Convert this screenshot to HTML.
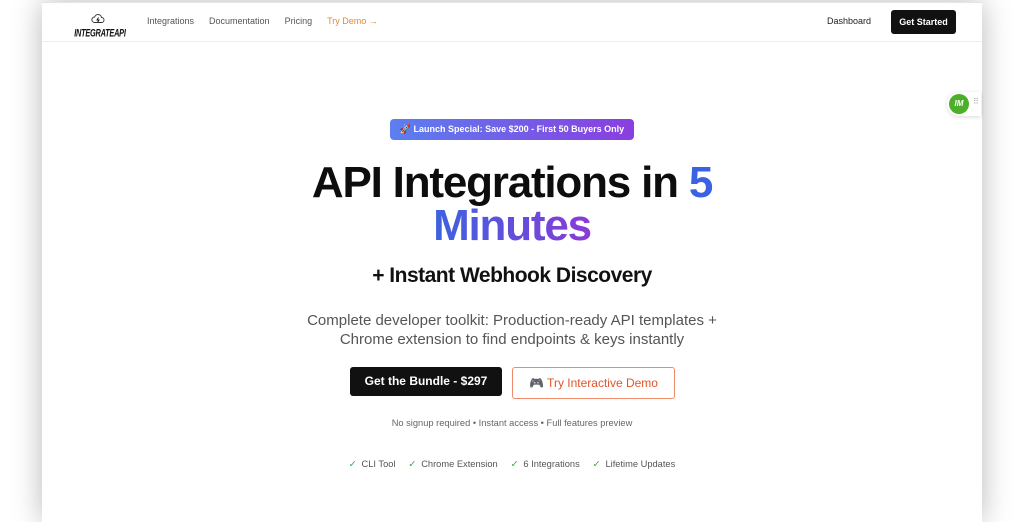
<!DOCTYPE html>
<html><head><meta charset="utf-8"><style>
*{margin:0;padding:0;box-sizing:border-box}
html,body{width:1024px;height:512px;overflow:hidden;background:#fff;font-family:"Liberation Sans",Arial,sans-serif}
.page{position:absolute;left:42px;top:2px;width:940px;height:520px;background:#fff;box-shadow:0 0 28px rgba(0,0,0,.28);border-top:1px solid #e5e5e5}
.nav{position:absolute;left:0;top:0;width:940px;height:39px;border-bottom:1px solid #eee}
.logo{position:absolute;left:27px;top:8px;width:58px;text-align:center}
.logo b{display:block;font-style:italic;font-weight:900;font-size:9px;letter-spacing:-.3px;color:#111;margin-top:-1px;transform:scale(.82,1.2);white-space:nowrap}
.links{position:absolute;left:105px;top:13px;font-size:9px;color:#555;white-space:nowrap}
.links span{margin-right:15px}
.dash{position:absolute;left:785px;top:13px;font-size:9px;color:#222}
.gs{position:absolute;left:849px;top:7px;width:65px;height:24px;background:#111;border-radius:3px;color:#fff;font-size:9px;font-weight:bold;text-align:center;line-height:24px}
.c{position:absolute;left:0;width:940px;text-align:center}
.badge{display:inline-block;height:21px;line-height:21px;padding:0 10px;border-radius:4px;background:linear-gradient(90deg,#5b7ff0,#8a3ee0);color:#fff;font-size:9px;font-weight:bold}
h1{font-size:44px;font-weight:bold;letter-spacing:-1.2px;line-height:43px;color:#0d0d0d}
.g{display:inline-block;background:linear-gradient(90deg,#3b63e0,#8a3ad8);-webkit-background-clip:text;background-clip:text;color:transparent}
.btn1{position:absolute;left:308px;top:364px;width:152px;height:29px;background:#111;border-radius:3px;color:#fff;font-size:12px;font-weight:bold;text-align:center;line-height:29px}
.btn2{position:absolute;left:470px;top:364px;width:163px;height:32px;border:1px solid #ee8a6a;border-radius:3px;color:#e2552a;font-size:12px;text-align:center;line-height:30px}
.ck{color:#3aa64a;margin-right:5px}
.fw{position:absolute;left:905px;top:89px;width:34px;height:24px;background:#fff;border-radius:12px 0 0 12px;box-shadow:0 1px 4px rgba(0,0,0,.15)}
.fw i{position:absolute;left:2px;top:2px;width:20px;height:20px;border-radius:50%;background:#4caf2a;color:#fff;font-size:8px;font-weight:900;font-style:italic;text-align:center;line-height:20px}
</style></head><body>
<div class="page">
 <div class="nav">
  <div class="logo"><svg width="14" height="10" viewBox="0 0 14 10"><path d="M3.5 8.5h7a2.5 2.5 0 0 0 0-5 3.5 3.5 0 0 0-6.8-.5A2.7 2.7 0 0 0 3.5 8.5z" fill="none" stroke="#333" stroke-width=".9"/><path d="M7.5 3.5 6 6h2l-1.5 2.5" fill="none" stroke="#111" stroke-width=".9"/></svg><b>INTEGRATEAPI</b></div>
  <div class="links"><span>Integrations</span><span>Documentation</span><span>Pricing</span><span style="color:#e8872f">Try Demo →</span></div>
  <div class="dash">Dashboard</div>
  <div class="gs">Get Started</div>
 </div>
 <div class="c" style="top:116px"><span class="badge">🚀 Launch Special: Save $200 - First 50 Buyers Only</span></div>
 <div class="c" style="top:158px"><h1>API Integrations in <span style="color:#3a62e2">5</span><br><span class="g">Minutes</span></h1></div>
 <div class="c" style="top:261px;font-size:21px;font-weight:bold;letter-spacing:-.5px;color:#111">+ Instant Webhook Discovery</div>
 <div class="c" style="top:308px;font-size:15px;line-height:19px;color:#555">Complete developer toolkit: Production-ready API templates +<br>Chrome extension to find endpoints &amp; keys instantly</div>
 <div class="btn1">Get the Bundle - $297</div>
 <div class="btn2">🎮 Try Interactive Demo</div>
 <div class="c" style="top:415px;font-size:9.3px;color:#666">No signup required • Instant access • Full features preview</div>
 <div class="c" style="top:456px;font-size:9.3px;color:#555"><span class="ck">✓</span>CLI Tool &nbsp;&nbsp;&nbsp;&nbsp;<span class="ck">✓</span>Chrome Extension &nbsp;&nbsp;&nbsp;&nbsp;<span class="ck">✓</span>6 Integrations &nbsp;&nbsp;&nbsp;&nbsp;<span class="ck">✓</span>Lifetime Updates</div>
 <div class="fw"><i>IM</i><span style="position:absolute;left:26px;top:5px;font-size:8px;color:#aaa">⠿</span></div>
</div>
</body></html>
